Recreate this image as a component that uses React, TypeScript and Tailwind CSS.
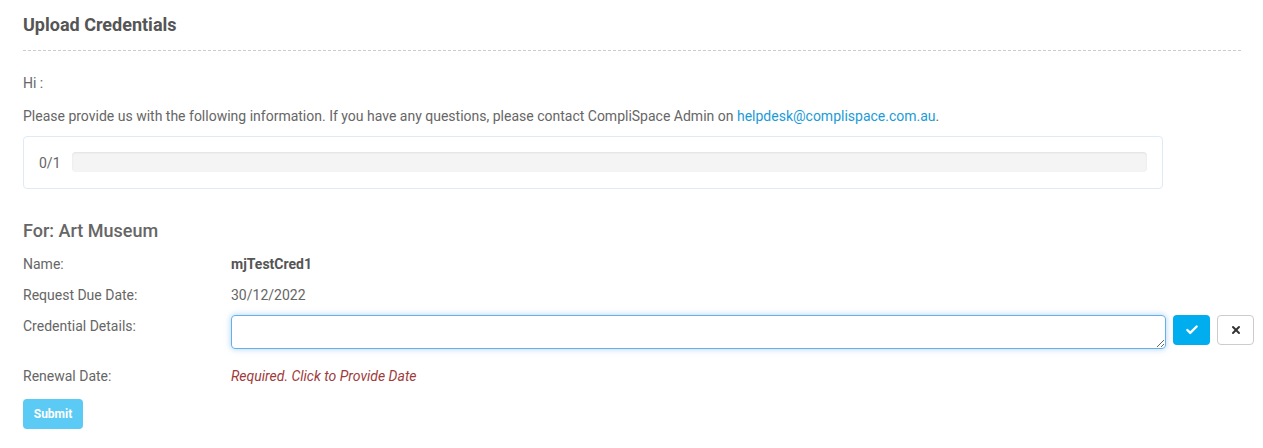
import { Check, X } from "lucide-react";

export default function App() {
  return (
    <div className="min-h-[448px] bg-white pl-[23px] pr-[9px] pt-[14px] text-[14px] text-[#666] font-['Roboto',sans-serif]">
      {/* Header */}
      <div className="mr-[13px] border-b border-dashed border-[#ccc] pb-[14px]">
        <h1 className="text-[18px] font-bold leading-[22px] text-[#555]">Upload Credentials</h1>
      </div>

      <p className="mt-[22px] leading-[20px]">Hi :</p>
      <p className="mt-[13px] leading-[20px]">
        Please provide us with the following information. If you have any questions, please contact CompliSpace
        Admin on <a className="text-[#1a9bd7]">helpdesk@complispace.com.au</a>.
      </p>

      {/* Progress */}
      <div className="mt-[10px] flex h-[53px] w-[1140px] items-center gap-[11px] rounded border border-[#dfeaf7] px-[15px]">
        <span className="leading-[20px]">0/1</span>
        <div className="-mt-[1px] h-[20px] flex-1 rounded bg-[#f4f4f4] shadow-[inset_0_1px_2px_rgba(0,0,0,0.08)]" />
      </div>

      <h2 className="mt-[31px] text-[18px] font-medium leading-[22px] text-[#666]">For: Art Museum</h2>

      <div className="mt-[12px] flex flex-col">
        <div className="flex h-[31px] items-start">
          <div className="w-[208px] leading-[20px]">Name:</div>
          <div className="font-bold leading-[20px] text-[#555]">mjTestCred1</div>
        </div>
        <div className="flex h-[31px] items-start">
          <div className="w-[208px] leading-[20px]">Request Due Date:</div>
          <div className="leading-[20px]">30/12/2022</div>
        </div>
        <div className="flex h-[50px] items-start">
          <div className="w-[208px] leading-[20px]">Credential Details:</div>
          <textarea className="-mt-[1px] h-[34px] w-[935px] resize-y rounded border border-[#66afe9] px-2 py-1 outline-none shadow-[0_0_6px_rgba(102,175,233,0.55)]" />
          <button className="-mt-[1px] ml-[7px] flex h-[30px] w-[37px] items-center justify-center rounded bg-[#00aeef] text-white">
            <Check size={14} strokeWidth={4} />
          </button>
          <button className="-mt-[1px] ml-[7px] flex h-[30px] w-[37px] items-center justify-center rounded border border-[#ccc] bg-white text-[#333]">
            <X size={12} strokeWidth={4} />
          </button>
        </div>
        <div className="flex h-[31px] items-start">
          <div className="w-[208px] leading-[20px]">Renewal Date:</div>
          <div className="italic leading-[20px] text-[#9e3b3b]">Required. Click to Provide Date</div>
        </div>
      </div>

      <button className="mt-[2px] h-[30px] w-[60px] rounded bg-[#5bcaf5] text-[12px] font-bold text-white">Submit</button>
    </div>
  );
}
